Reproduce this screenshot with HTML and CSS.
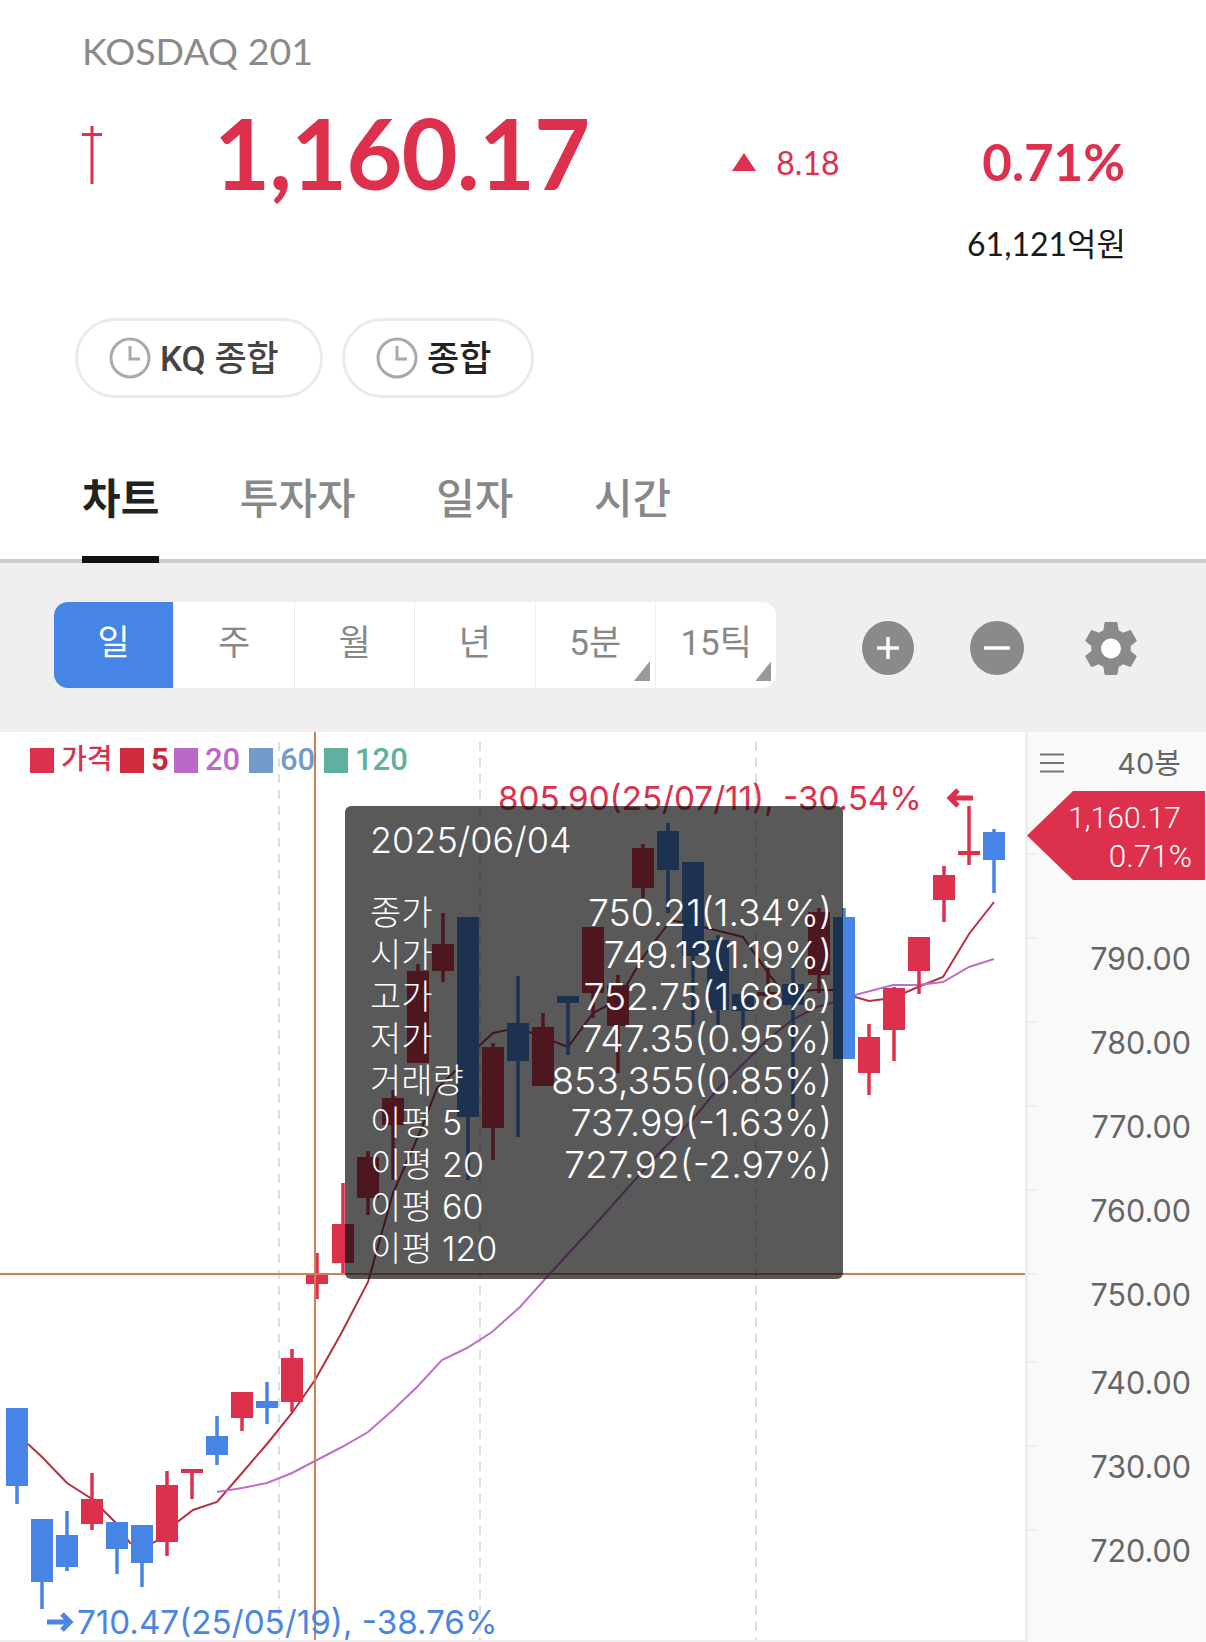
FILE: index.html
```html
<!DOCTYPE html>
<html lang="ko">
  <head>
    <meta charset="UTF-8">
    <meta name="viewport" content="width=device-width, initial-scale=1.0">
    <title>KOSDAQ 201</title>
    <link rel="stylesheet" href="styles.css">
  </head>
  <body>
    <header class="quote">
      <div class="quote-name">KOSDAQ 201</div>
      <div class="quote-main">
        <svg class="limit-mark" viewBox="0 0 20 58"><path d="M10 0v58M0 8.5h20"/></svg>
        <div class="quote-price">1,160.17</div>
        <div class="quote-change">
          <svg class="tri-up" viewBox="0 0 24 18"><path d="M12 0l12 18H0z"/></svg>
          <span class="change-value">8.18</span>
        </div>
        <div class="quote-rate">0.71%</div>
      </div>
      <div class="quote-amount">61,121억원</div>
      <div class="pills">
        <div class="pill pill-kq">
          <svg class="clock" viewBox="0 0 42 42"><circle cx="21" cy="21" r="19"/><path d="M21 9v13h10"/></svg>
          <span class="pill-label">KQ 종합</span>
        </div>
        <div class="pill pill-all">
          <svg class="clock" viewBox="0 0 42 42"><circle cx="21" cy="21" r="19"/><path d="M21 9v13h10"/></svg>
          <span class="pill-label">종합</span>
        </div>
      </div>
    </header>

    <nav class="tabs">
      <div class="tab active">차트</div>
      <div class="tab">투자자</div>
      <div class="tab">일자</div>
      <div class="tab">시간</div>
    </nav>

    <div class="toolbar">
      <div class="periods">
        <div class="period selected">일</div>
        <div class="period">주</div>
        <div class="period">월</div>
        <div class="period">년</div>
        <div class="period more">5분</div>
        <div class="period more">15틱</div>
      </div>
      <div class="tools">
        <svg class="tool tool-plus" viewBox="0 0 52 54"><ellipse cx="26" cy="27" rx="26" ry="27"/><path d="M26 16v22M15 27h22"/></svg>
        <svg class="tool tool-minus" viewBox="0 0 54 54"><ellipse cx="27" cy="27" rx="27" ry="27"/><path d="M14 27h26"/></svg>
        <svg class="tool tool-gear" viewBox="2.5 2 19 20">
          <circle class="gear-hole" cx="12" cy="12" r="4"/>
          <path d="M19.14 12.94c.04-.3.06-.61.06-.94 0-.32-.02-.64-.07-.94l2.03-1.58a.49.49 0 0 0 .12-.61l-1.92-3.32a.488.488 0 0 0-.59-.22l-2.39.96c-.5-.38-1.03-.7-1.62-.94l-.36-2.54a.484.484 0 0 0-.48-.41h-3.84c-.24 0-.43.17-.47.41l-.36 2.54c-.59.24-1.13.57-1.62.94l-2.39-.96c-.22-.08-.47 0-.59.22L2.74 8.87c-.12.21-.08.47.12.61l2.03 1.58c-.05.3-.09.63-.09.94s.02.64.07.94l-2.03 1.58a.49.49 0 0 0-.12.61l1.92 3.32c.12.22.37.29.59.22l2.39-.96c.5.38 1.03.7 1.62.94l.36 2.54c.05.24.24.41.48.41h3.84c.24 0 .44-.17.47-.41l.36-2.54c.59-.24 1.13-.56 1.62-.94l2.39.96c.22.08.47 0 .59-.22l1.92-3.32c.12-.22.07-.47-.12-.61l-2.01-1.58zM12 15.6c-1.98 0-3.6-1.62-3.6-3.6s1.62-3.6 3.6-3.6 3.6 1.62 3.6 3.6-1.62 3.6-3.6 3.6z"/>
        </svg>
      </div>
    </div>

    <section class="chart">
      <div class="plot">
        <svg class="candles" viewBox="0 732 1026 910">
          <path class="grid" d="M279 742V1640M480 742V1640M756 742V1640"/>

          <polyline class="ma5" points="28,1444 42,1457 67,1483 92,1499 117,1524 130,1543 142,1547 155,1542 167,1530 193,1510 217,1502 242,1473 267,1444 292,1413 315,1380 342,1332 368,1282 393,1193 421,1130 437,1088 467,1060 478,1047 493,1033 517,1028 532,1033 568,1047 593,1013 618,1000 643,957 671,920 707,928 743,937 771,977 784,993 814,990 832,990 855,997 869,1001 893,998 918,987 943,977 969,934 994,902"/>
          <polyline class="ma20" points="217,1492 242,1488 267,1483 292,1473 315,1461 342,1447 368,1432 393,1410 417,1387 442,1360 467,1348 492,1332 520,1307 546,1278 567,1255 592,1228 617,1200 642,1172 667,1145 692,1120 717,1090 742,1065 767,1040 792,1020 817,1007 842,1000 855,995 893,985 918,985 943,982 969,967 994,959"/>

          <g class="down"><rect x="6" y="1408" width="22" height="78"/><path d="M17 1486v18"/></g>
          <g class="down"><rect x="31" y="1519" width="22" height="63"/><path d="M42 1582v27"/></g>
          <g class="down"><rect x="56" y="1535" width="22" height="32"/><path d="M67 1511v60"/></g>
          <g class="up"><rect x="81" y="1499" width="22" height="25"/><path d="M92 1473v57"/></g>
          <g class="down"><rect x="106" y="1522" width="22" height="27"/><path d="M117 1549v25"/></g>
          <g class="down"><rect x="131" y="1525" width="22" height="38"/><path d="M142 1563v24"/></g>
          <g class="up"><rect x="156" y="1485" width="22" height="57"/><path d="M167 1471v85"/></g>
          <g class="up"><rect x="181" y="1469" width="22" height="4"/><path d="M192 1469v30"/></g>
          <g class="down"><rect x="206" y="1436" width="22" height="19"/><path d="M217 1416v49"/></g>
          <g class="up"><rect x="231" y="1392" width="22" height="26"/><path d="M242 1418v13"/></g>
          <g class="down"><rect x="256" y="1401" width="22" height="7"/><path d="M267 1382v42"/></g>
          <g class="up"><rect x="281" y="1358" width="22" height="44"/><path d="M292 1349v63"/></g>
          <g class="up"><rect x="306" y="1275" width="22" height="9"/><path d="M317 1253v46"/></g>
          <g class="up"><rect x="332" y="1224" width="22" height="39"/><path d="M343 1183v91"/></g>
          <g class="up"><rect x="357" y="1157" width="22" height="41"/><path d="M368 1151v64"/></g>
          <g class="up"><rect x="382" y="1098" width="22" height="27"/><path d="M393 1090v90"/></g>
          <g class="up"><rect x="407" y="971" width="22" height="92"/><path d="M418 964v99"/></g>
          <g class="up"><rect x="432" y="944" width="22" height="27"/><path d="M443 913v69"/></g>
          <g class="down"><rect x="457" y="917" width="22" height="200"/><path d="M468 1117v63"/></g>
          <g class="up"><rect x="482" y="1047" width="22" height="81"/><path d="M493 1043v117"/></g>
          <g class="down"><rect x="507" y="1023" width="22" height="38"/><path d="M518 976v161"/></g>
          <g class="up"><rect x="532" y="1027" width="22" height="59"/><path d="M543 1013v73"/></g>
          <g class="down"><rect x="557" y="996" width="22" height="7"/><path d="M568 996v59"/></g>
          <g class="up"><rect x="582" y="927" width="22" height="66"/><path d="M593 927v91"/></g>
          <g class="up"><rect x="607" y="985" width="22" height="41"/><path d="M618 975v98"/></g>
          <g class="up"><rect x="632" y="848" width="22" height="40"/><path d="M643 844v54"/></g>
          <g class="down"><rect x="657" y="831" width="22" height="39"/><path d="M668 823v90"/></g>
          <g class="down"><rect x="682" y="862" width="22" height="94"/><path d="M693 956v69"/></g>
          <g class="down"><rect x="707" y="940" width="22" height="70"/><path d="M718 935v92"/></g>
          <g class="down"><rect x="732" y="994" width="22" height="17"/><path d="M743 994v36"/></g>
          <g class="up"><rect x="757" y="992" width="22" height="4"/><path d="M768 968v37"/></g>
          <g class="down"><rect x="782" y="984" width="22" height="21"/><path d="M793 967v141"/></g>
          <g class="up"><rect x="808" y="912" width="22" height="63"/><path d="M819 908v85"/></g>
          <g class="down"><rect x="833" y="917" width="22" height="142"/><path d="M844 908v9"/></g>
          <g class="up"><rect x="858" y="1037" width="22" height="36"/><path d="M869 1024v71"/></g>
          <g class="up"><rect x="883" y="988" width="22" height="42"/><path d="M894 987v74"/></g>
          <g class="up"><rect x="908" y="937" width="22" height="34"/><path d="M919 971v23"/></g>
          <g class="up"><rect x="933" y="875" width="22" height="25"/><path d="M944 866v56"/></g>
          <g class="up"><rect x="958" y="851" width="22" height="4"/><path d="M969 806v59"/></g>
          <g class="down"><rect x="983" y="832" width="22" height="28"/><path d="M994 829v64"/></g>

          <path class="cross" d="M315 732V1642M0 1274H1026"/>
        </svg>

        <div class="legend">
          <span class="legend-item c-price"><i></i>가격</span>
          <span class="legend-item c-5"><i></i><b>5</b></span>
          <span class="legend-item c-20"><i></i>20</span>
          <span class="legend-item c-60"><i></i>60</span>
          <span class="legend-item c-120"><i></i>120</span>
        </div>

        <div class="extreme extreme-high">
          <span>805.90(25/07/11), -30.54%</span>
          <svg class="arrow" viewBox="0 0 27 20"><path d="M27 10H4M12 2l-8 8 8 8"/></svg>
        </div>
        <div class="extreme extreme-low">
          <svg class="arrow" viewBox="0 0 27 20"><path d="M0 10H23M15 2l8 8-8 8"/></svg>
          <span>710.47(25/05/19), -38.76%</span>
        </div>

        <div class="tip">
          <div class="tip-date">2025/06/04</div>
          <div class="tip-rows">
            <span>종가</span><span>750.21(1.34%)</span>
            <span>시가</span><span>749.13(1.19%)</span>
            <span>고가</span><span>752.75(1.68%)</span>
            <span>저가</span><span>747.35(0.95%)</span>
            <span>거래량</span><span>853,355(0.85%)</span>
            <span>이평 5</span><span>737.99(-1.63%)</span>
            <span>이평 20</span><span>727.92(-2.97%)</span>
            <span>이평 60</span><span></span>
            <span>이평 120</span><span></span>
          </div>
        </div>
      </div>

      <aside class="axis">
        <div class="axis-head">
          <svg class="menu-icon" viewBox="0 0 24 20"><path d="M0 1.5h24M0 10h24M0 18.5h24"/></svg>
          <span class="bar-count">40봉</span>
        </div>
        <div class="now-flag">
          <div class="now-price">1,160.17</div>
          <div class="now-rate">0.71%</div>
        </div>
        <div class="axis-scale">
          <div class="axis-row"></div>
          <div class="axis-row">790.00</div>
          <div class="axis-row">780.00</div>
          <div class="axis-row">770.00</div>
          <div class="axis-row">760.00</div>
          <div class="axis-row wide">750.00</div>
          <div class="axis-row">740.00</div>
          <div class="axis-row">730.00</div>
          <div class="axis-row">720.00</div>
        </div>
      </aside>
    </section>
  </body>
</html>
```

FILE: styles.css
```css
body{
  margin: 0;
  width: 1206px;
  height: 1642px;
  overflow: hidden;
  background-color: white;
  font-family: Lato, 'Noto Sans CJK KR', sans-serif;
}

/* quote header */
.quote{
  height: 416px;
  padding-left: 82px;
  box-sizing: border-box;
}
.quote-name{
  padding-top: 27px;
  font-size: 37.5px;
  line-height: 48px;
  color: #8a8a8a;
}
.quote-main{
  display: flex;
  align-items: flex-start;
  height: 92px;
  margin-top: 31px;
}
.limit-mark{
  width: 20px;
  height: 58px;
  margin-top: 20px;
  fill: none;
  stroke: #dc304d;
  stroke-width: 3;
}
.quote-price{
  margin-left: 112px;
  margin-top: 1px;
  font-size: 97px;
  line-height: 92px;
  font-weight: 700;
  color: #dc304d;
  letter-spacing: -1px;
}
.quote-change{
  display: flex;
  align-items: center;
  gap: 20px;
  margin-top: 35px;
  margin-left: 143px;
  font-size: 32px;
  line-height: 40px;
  color: #dc304d;
}
.change-value{
  padding-top: 2px;
}
.tri-up{
  width: 24px;
  height: 18px;
  fill: #dc304d;
}
.quote-rate{
  margin-top: 26px;
  margin-left: auto;
  margin-right: 81px;
  font-size: 51px;
  line-height: 60px;
  font-weight: 700;
  color: #dc304d;
}
.quote-amount{
  margin-top: 26px;
  margin-right: 80px;
  text-align: right;
  font-size: 32px;
  line-height: 40px;
  color: #1a1a1a;
}
.pills{
  display: flex;
  gap: 19px;
  margin-top: 54px;
  margin-left: -7px;
}
.pill{
  display: flex;
  align-items: center;
  gap: 9px;
  height: 80px;
  box-sizing: border-box;
  border: 3px solid #ebebeb;
  border-radius: 40px;
  font-size: 35px;
  font-weight: 500;
  font-family: Roboto, 'Noto Sans CJK KR', sans-serif;
}
.pill-label{
  padding-bottom: 6px;
}
.pill-kq{
  width: 248px;
  padding-left: 31px;
  color: #444;
}
.pill-all{
  width: 192px;
  padding-left: 31px;
  color: #222;
}
.clock{
  flex: none;
  width: 42px;
  height: 42px;
  fill: none;
  stroke: #aaa;
  stroke-width: 3;
}

/* tabs */
.tabs{
  display: flex;
  gap: 80.5px;
  height: 147px;
  box-sizing: border-box;
  padding-left: 82px;
  border-bottom: 4px solid #ccc;
}
.tab{
  height: 143px;
  box-sizing: border-box;
  padding-top: 50px;
  font-size: 42px;
  line-height: 60px;
  font-weight: 500;
  font-family: 'Noto Sans CJK KR', sans-serif;
  color: #888;
}
.tab.active{
  height: 147px;
  border-bottom: 7px solid #111;
  font-weight: 700;
  color: #222;
}

/* period toolbar */
.toolbar{
  display: flex;
  height: 169px;
  box-sizing: border-box;
  padding: 39px 0 0 54px;
  background-color: #efefef;
}
.periods{
  display: flex;
  height: 86px;
  border-radius: 14px;
  overflow: hidden;
  background-color: white;
}
.period{
  position: relative;
  width: 120.4px;
  box-sizing: border-box;
  border-right: 1px solid #eee;
  text-align: center;
  font-size: 35px;
  line-height: 84px;
  font-family: Roboto, 'Noto Sans CJK KR', sans-serif;
  color: #888;
}
.period:last-child{
  border-right: none;
}
.period.selected{
  background-color: #4685e5;
  color: white;
}
.period.more::after{
  content: '';
  position: absolute;
  right: 5px;
  bottom: 7px;
  width: 16px;
  height: 20px;
  background-color: #999;
  clip-path: polygon(100% 0, 100% 100%, 0 100%);
}
.tools{
  display: flex;
  align-items: flex-start;
  margin-left: 86px;
  padding-top: 19px;
}
.tool{
  height: 54px;
  fill: #8a8a8a;
}
.tool path{
  fill: none;
  stroke: white;
  stroke-width: 3.5;
}
.tool-plus{
  width: 52px;
}
.tool-minus{
  width: 54px;
  margin-left: 56px;
}
.tool-gear{
  width: 54px;
  height: 55px;
  margin-left: 60px;
}
.tool-gear path{
  fill: #8a8a8a;
  stroke: none;
}
.gear-hole{
  fill: white;
}

/* chart */
.chart{
  display: flex;
  height: 910px;
}
.plot{
  position: relative;
  width: 1025px;
  flex: none;
  overflow: hidden;
  border-bottom: 2px solid #eee;
  box-sizing: border-box;
}
.candles{
  display: block;
  width: 1026px;
  height: 910px;
}
.grid{
  fill: none;
  stroke: #dedede;
  stroke-width: 2;
  stroke-dasharray: 9 7;
}
.ma5{
  fill: none;
  stroke: #b5303f;
  stroke-width: 2;
}
.ma20{
  fill: none;
  stroke: #bc6fcb;
  stroke-width: 2;
}
.up rect{
  fill: #dd304d;
}
.up path{
  stroke: #dd304d;
  stroke-width: 3.5;
}
.down rect{
  fill: #4685e5;
}
.down path{
  stroke: #4685e5;
  stroke-width: 3.5;
}
.cross{
  fill: none;
  stroke: #cc8055;
  stroke-width: 2;
}

.legend{
  position: absolute;
  top: 13px;
  left: 30px;
  display: flex;
  font-family: Roboto, 'Noto Sans CJK KR', sans-serif;
  font-size: 31px;
  line-height: 30px;
  font-weight: 500;
}
.legend-item{
  display: flex;
  align-items: center;
  gap: 7px;
}
.legend-item i{
  width: 24px;
  height: 25px;
}
.legend-item b{
  font-weight: 700;
}
.c-price{
  width: 90px;
  color: #dc304d;
  font-size: 28px;
}
.c-price i{
  background-color: #dd304d;
}
.c-5{
  width: 54px;
  color: #c8283c;
}
.c-5 i{
  background-color: #d12b3e;
}
.c-20{
  width: 75px;
  color: #bb68c8;
}
.c-20 i{
  background-color: #bb68c8;
}
.c-60{
  width: 75px;
  color: #729bc9;
}
.c-60 i{
  background-color: #729bc9;
}
.c-120{
  color: #5fb09e;
}
.c-120 i{
  background-color: #5fb09e;
}

.extreme{
  position: absolute;
  display: flex;
  align-items: center;
  font-family: Inter, sans-serif;
  font-size: 33.2px;
  line-height: 40px;
}
.arrow{
  width: 27px;
  height: 20px;
  fill: none;
  stroke: currentColor;
  stroke-width: 5;
}
.extreme-high{
  top: 46px;
  left: 498px;
  gap: 24px;
  color: #dc304d;
}
.extreme-low{
  top: 870px;
  left: 47px;
  gap: 3px;
  color: #4a86e0;
}

.tip{
  position: absolute;
  top: 74px;
  left: 345px;
  width: 498px;
  height: 473px;
  box-sizing: border-box;
  padding: 12px 11px 0 25px;
  border-radius: 6px;
  background-color: rgba(10, 10, 10, 0.68);
  color: white;
  font-family: Inter, 'Noto Sans CJK KR', sans-serif;
  font-size: 36px;
  font-weight: 300;
}
.tip-date{
  line-height: 44px;
}
.tip-rows{
  display: grid;
  grid-template-columns: auto 1fr;
  grid-auto-rows: 42px;
  margin-top: 30px;
  font-size: 34px;
  line-height: 42px;
}
.tip-rows span:nth-child(even){
  text-align: right;
  font-size: 37.3px;
}

/* price axis */
.axis{
  position: relative;
  flex: 1;
  box-sizing: border-box;
  border-left: 3px solid #eee;
  background-color: #f9f9f9;
  color: #666;
  font-family: Inter, 'Noto Sans CJK KR', sans-serif;
  font-size: 30.5px;
}
.axis-head{
  display: flex;
  justify-content: space-between;
  align-items: center;
  height: 62px;
  padding: 0 25px 0 12px;
}
.bar-count{
  padding-bottom: 4px;
  font-size: 29px;
}
.menu-icon{
  width: 24px;
  height: 20px;
  fill: none;
  stroke: #777;
  stroke-width: 2;
}
.now-flag{
  position: absolute;
  top: 59px;
  right: 1px;
  width: 178px;
  height: 89px;
  box-sizing: border-box;
  padding: 7px 13px 0 0;
  background-color: #dd304d;
  clip-path: polygon(0 50%, 46px 0, 100% 0, 100% 100%, 46px 100%);
  color: white;
  text-align: right;
  font-family: Roboto, sans-serif;
  font-size: 30px;
  line-height: 39px;
  font-weight: 300;
}
.now-price{
  margin-right: 11px;
}
.now-rate{
  font-size: 31.5px;
}
.axis-scale{
  padding-top: 59px;
}
.axis-row{
  position: relative;
  height: 84px;
  box-sizing: border-box;
  padding-right: 15px;
  text-align: right;
  line-height: 44px;
}
.axis-row.wide{
  height: 88px;
}
.axis-row::before{
  content: '';
  position: absolute;
  top: 0;
  left: 0;
  width: 9px;
  height: 2px;
  background-color: #eee;
}
```
